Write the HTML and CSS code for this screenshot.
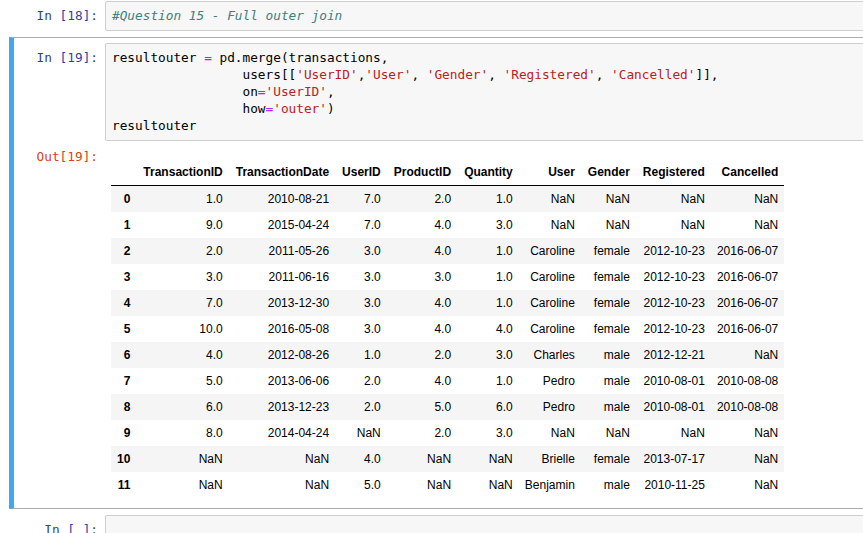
FILE: index.html
```html
<!DOCTYPE html>
<html>
<head>
<meta charset="utf-8">
<link rel="stylesheet" href="styles.css">
</head>
<body>
<div class="notebook">
  <div class="cell first">
    <div class="row">
      <div class="prompt in">In [18]:</div>
      <div class="input-area"><pre><span class="c">#Question 15 - Full outer join</span></pre></div>
    </div>
  </div>

  <div class="cell selected">
    <div class="row">
      <div class="prompt in">In [19]:</div>
      <div class="input-area"><pre>resultouter <span class="o">=</span> pd.merge(transactions,
                 users[[<span class="s">'UserID'</span>,<span class="s">'User'</span>, <span class="s">'Gender'</span>, <span class="s">'Registered'</span>, <span class="s">'Cancelled'</span>]],
                 on<span class="o">=</span><span class="s">'UserID'</span>,
                 how<span class="o">=</span><span class="s">'outer'</span>)
resultouter</pre></div>
    </div>
    <div class="row">
      <div class="prompt out">Out[19]:</div>
      <div class="output-subarea">
        <table class="df">
          <thead>
            <tr><th></th><th>TransactionID</th><th>TransactionDate</th><th>UserID</th><th>ProductID</th><th>Quantity</th><th>User</th><th>Gender</th><th>Registered</th><th>Cancelled</th></tr>
          </thead>
          <tbody>
            <tr><th>0</th><td>1.0</td><td>2010-08-21</td><td>7.0</td><td>2.0</td><td>1.0</td><td>NaN</td><td>NaN</td><td>NaN</td><td>NaN</td></tr>
            <tr><th>1</th><td>9.0</td><td>2015-04-24</td><td>7.0</td><td>4.0</td><td>3.0</td><td>NaN</td><td>NaN</td><td>NaN</td><td>NaN</td></tr>
            <tr><th>2</th><td>2.0</td><td>2011-05-26</td><td>3.0</td><td>4.0</td><td>1.0</td><td>Caroline</td><td>female</td><td>2012-10-23</td><td>2016-06-07</td></tr>
            <tr><th>3</th><td>3.0</td><td>2011-06-16</td><td>3.0</td><td>3.0</td><td>1.0</td><td>Caroline</td><td>female</td><td>2012-10-23</td><td>2016-06-07</td></tr>
            <tr><th>4</th><td>7.0</td><td>2013-12-30</td><td>3.0</td><td>4.0</td><td>1.0</td><td>Caroline</td><td>female</td><td>2012-10-23</td><td>2016-06-07</td></tr>
            <tr><th>5</th><td>10.0</td><td>2016-05-08</td><td>3.0</td><td>4.0</td><td>4.0</td><td>Caroline</td><td>female</td><td>2012-10-23</td><td>2016-06-07</td></tr>
            <tr><th>6</th><td>4.0</td><td>2012-08-26</td><td>1.0</td><td>2.0</td><td>3.0</td><td>Charles</td><td>male</td><td>2012-12-21</td><td>NaN</td></tr>
            <tr><th>7</th><td>5.0</td><td>2013-06-06</td><td>2.0</td><td>4.0</td><td>1.0</td><td>Pedro</td><td>male</td><td>2010-08-01</td><td>2010-08-08</td></tr>
            <tr><th>8</th><td>6.0</td><td>2013-12-23</td><td>2.0</td><td>5.0</td><td>6.0</td><td>Pedro</td><td>male</td><td>2010-08-01</td><td>2010-08-08</td></tr>
            <tr><th>9</th><td>8.0</td><td>2014-04-24</td><td>NaN</td><td>2.0</td><td>3.0</td><td>NaN</td><td>NaN</td><td>NaN</td><td>NaN</td></tr>
            <tr><th>10</th><td>NaN</td><td>NaN</td><td>4.0</td><td>NaN</td><td>NaN</td><td>Brielle</td><td>female</td><td>2013-07-17</td><td>NaN</td></tr>
            <tr><th>11</th><td>NaN</td><td>NaN</td><td>5.0</td><td>NaN</td><td>NaN</td><td>Benjamin</td><td>male</td><td>2010-11-25</td><td>NaN</td></tr>
          </tbody>
        </table>
      </div>
    </div>
  </div>

  <div class="cell">
    <div class="row">
      <div class="prompt in">In [ ]:</div>
      <div class="input-area"><pre> </pre></div>
    </div>
  </div>
</div>
</body>
</html>
```
FILE: styles.css
```css
html, body {
  margin: 0;
  padding: 0;
  background: #ffffff;
  overflow: hidden;
}

body {
  font-family: "Liberation Sans", Arial, sans-serif;
  color: #000;
}

.notebook {
  width: 1000px;
  margin-left: 9px;
  margin-top: -5px;
}

.cell {
  border: 1px solid transparent;
  border-left-width: 5px;
  padding: 5px 0 5px 0;
  display: flex;
  flex-direction: column;
}

.cell.selected {
  border-color: #ababab;
  border-left-color: #42a5f5;
}

.row {
  display: flex;
  align-items: flex-start;
}

.prompt {
  flex: none;
  width: 91px;
  box-sizing: border-box;
  padding: 6px 7px 0 0;
  text-align: right;
  font-family: "DejaVu Sans Mono", "Liberation Mono", monospace;
  font-size: 12.75px;
  line-height: 17px;
  white-space: pre;
}

.prompt.in {
  color: #303f9f;
}

.prompt.out {
  color: #d84315;
  padding-top: 7px;
}

.input-area {
  flex: 1;
  background: #f7f7f7;
  border: 1px solid #cfcfcf;
  border-radius: 2px;
}

.input-area pre {
  margin: 0;
  padding: 5px 6px 6px;
  font-family: "DejaVu Sans Mono", "Liberation Mono", monospace;
  font-size: 12.75px;
  line-height: 17px;
  color: #000;
}

.c {
  color: #408080;
  font-style: italic;
}

.o {
  color: #aa22ff;
}

.s {
  color: #ba2121;
}

.output-subarea {
  flex: 1;
  padding: 6px 0 5px 6px;
}

.df {
  margin-top: 12px;
  border-collapse: collapse;
  border-spacing: 0;
  font-size: 12px;
  font-family: "Liberation Sans", Arial, sans-serif;
  color: #000;
}

.df th,
.df td {
  padding: 6px;
  text-align: right;
  white-space: nowrap;
  line-height: 14px;
}

.df th {
  font-weight: bold;
}

.df thead th {
  padding-left: 7px;
}

.df thead {
  border-bottom: 1px solid #000;
}

.df tbody tr:nth-child(odd) {
  background: #f5f5f5;
}
```
